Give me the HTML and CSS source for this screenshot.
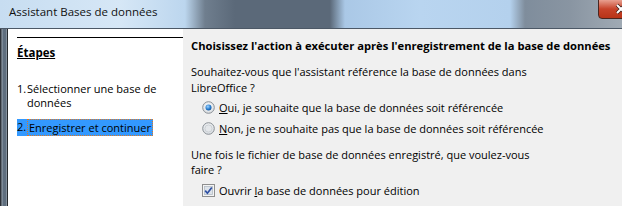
FILE: index.html
```html
<!DOCTYPE html>
<html lang="fr">
<head>
  <meta charset="UTF-8" />
  <title>Assistant Bases de données</title>
  <link rel="stylesheet" href="styles.css">
</head>
<body>
  <div class="window">
    <!-- Title bar -->
    <div class="titlebar">
      <span class="title">Assistant Bases de données</span>
      <span class="close-btn">
        <svg width="12" height="12" viewBox="0 0 12 12">
          <path d="M2 2 L10 10 M10 2 L2 10" stroke="#3a1a14" stroke-width="3.4"/>
          <path d="M2 2 L10 10 M10 2 L2 10" stroke="#ffffff" stroke-width="2"/>
        </svg>
      </span>
    </div>

    <div class="client">
      <div class="frame-left"></div>

      <!-- Steps pane -->
      <div class="steps">
        <div class="steps-rule"></div>
        <h4 class="steps-title">Étapes</h4>
        <ol class="steps-list">
          <li><span class="num">1.</span><span>Sélectionner une base de données</span></li>
          <li class="current"><span class="num">2.</span><span class="focus">Enregistrer et continuer</span></li>
        </ol>
      </div>

      <!-- Page content -->
      <div class="content">
        <h3 class="heading">Choisissez l'action à exécuter après l'enregistrement de la base de données</h3>

        <p class="question">Souhaitez-vous que l'assistant référence la base de données dans LibreOffice ?</p>
        <div class="options">
          <label class="option">
            <svg class="radio" width="13" height="13" viewBox="0 0 13 13">
              <defs>
                <radialGradient id="rbg" cx="50%" cy="40%" r="60%">
                  <stop offset="0" stop-color="#ffffff"/>
                  <stop offset="1" stop-color="#d6dbe0"/>
                </radialGradient>
                <radialGradient id="rdot" cx="40%" cy="35%" r="70%">
                  <stop offset="0" stop-color="#9fd3ff"/>
                  <stop offset="0.6" stop-color="#2a7fd0"/>
                  <stop offset="1" stop-color="#0d4f96"/>
                </radialGradient>
              </defs>
              <circle cx="6.5" cy="6.5" r="5.8" fill="url(#rbg)" stroke="#8a9096" stroke-width="1"/>
              <circle cx="6.5" cy="6.5" r="3" fill="url(#rdot)"/>
            </svg>
            <span><u>O</u>ui, je souhaite que la base de données soit référencée</span>
          </label>
          <label class="option">
            <svg class="radio" width="13" height="13" viewBox="0 0 13 13">
              <circle cx="6.5" cy="6.5" r="5.8" fill="url(#rbg)" stroke="#8a9096" stroke-width="1"/>
              <circle cx="6.5" cy="6.5" r="3.6" fill="#e4e7ea" stroke="#c4c9ce" stroke-width="0.8"/>
            </svg>
            <span><u>N</u>on, je ne souhaite pas que la base de données soit référencée</span>
          </label>
        </div>

        <p class="question second">Une fois le fichier de base de données enregistré, que voulez-vous faire ?</p>
        <div class="options last">
          <label class="option">
            <svg class="check" width="13" height="13" viewBox="0 0 13 13">
              <rect x="0.5" y="0.5" width="12" height="12" fill="#f4f4f4" stroke="#8e8f8f"/>
              <rect x="2.5" y="2.5" width="8" height="8" fill="#dde3ea" stroke="#b4bcc6" stroke-width="0.8"/>
              <path d="M3.2 6.6 L5.4 9.2 L9.8 3.4" fill="none" stroke="#2e4fa3" stroke-width="1.7"/>
            </svg>
            <span>Ouvrir <u>l</u>a base de données pour édition</span>
          </label>
        </div>
      </div>
    </div>
  </div>
</body>
</html>
```

FILE: styles.css
```css
* {
  box-sizing: border-box;
}

body {
  margin: 0;
  padding: 0;
  font-family: "Open Sans", "Noto Sans", sans-serif;
  font-size: 11px;
  color: #000;
  background: #f0f0f0;
}

.window {
  width: 622px;
  height: 206px;
  overflow: hidden;
  display: flex;
  flex-direction: column;
}

.titlebar {
  position: relative;
  height: 29px;
  flex-shrink: 0;
  padding: 4px 0 0 9px;
  border-bottom: 1px solid #4c5866;
  background: linear-gradient(to right,
    #c7ddf1 0px, #d6e7f6 120px, #bcd6ee 185px,
    #6f7e8e 205px, #5b6979 235px, #5b6979 330px,
    #aac8e6 345px, #b9d5f0 420px, #b4d1ed 510px,
    #7f8d9c 525px, #8995a2 570px, #a0aab4 622px);
}

.title {
  font-size: 11.5px;
  line-height: 16px;
  color: #111;
}

/* red close button of the window frame */
.close-btn {
  position: absolute;
  top: -1px;
  left: 598px;
  width: 44px;
  height: 20px;
  padding: 3px 0 0 16px;
  border: 1px solid #4a2620;
  border-radius: 0 0 0 4px;
  background: linear-gradient(#e8a090, #c7432a 50%, #b83418);
}

.close-btn svg {
  display: block;
}

.client {
  flex: 1;
  display: flex;
}

.frame-left {
  width: 9px;
  flex-shrink: 0;
  background: linear-gradient(to right,
    #2e3238 0px, #2e3238 1px, #9aa6b2 2px, #5f6e7e 3px,
    #5f6e7e 6px, #a8b2bc 7px, #24282c 7px, #24282c 8px, #ffffff 8px);
}

.steps {
  width: 174px;
  flex-shrink: 0;
  background: #fff;
  padding: 8px 0 0 8px;
}

.steps-rule {
  height: 1px;
  background: #000;
}

.steps-title {
  margin: 7px 0 0;
  font-size: 11.5px;
  font-weight: bold;
  line-height: 16px;
  text-decoration: underline;
}

.steps-list {
  list-style: none;
  margin: 21px 0 0;
  padding: 0;
  font-size: 11px;
  line-height: 14px;
}

.steps-list li {
  display: flex;
  margin-bottom: 9px;
}

.steps-list .num {
  width: 10px;
  flex-shrink: 0;
}

.steps-list .current {
  align-self: flex-start;
  width: fit-content;
  background: #3399ff;
  line-height: 15px;
}

.focus {
  border: 1px dotted #e07820;
  padding: 0 1px;
}

.content {
  flex: 1;
  padding: 9px 0 0 8px;
}

.heading {
  margin: 0;
  font-size: 11.2px;
  font-weight: bold;
  line-height: 16px;
}

.question {
  margin: 10px 0 0;
  width: 360px;
  line-height: 16px;
}

.question.second {
  margin-top: 8px;
  line-height: 15px;
}

.options {
  padding-left: 11px;
  margin-top: 1px;
}

.options.last {
  margin-top: 3px;
}

.option {
  display: flex;
  align-items: center;
  gap: 4px;
  height: 21px;
}

.radio,
.check {
  flex-shrink: 0;
}
```
